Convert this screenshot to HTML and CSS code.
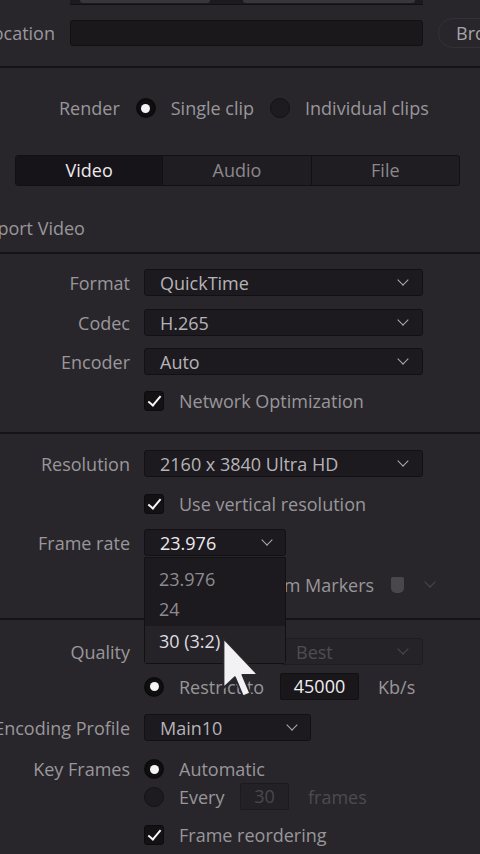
FILE: index.html
```
<!DOCTYPE html>
<html lang="en">

<head>
    <meta charset="UTF-8">
    <meta name="viewport" content="width=device-width, initial-scale=1.0">
    <title>Render Settings</title>
    <link rel="stylesheet" href="styles.css">
</head>

<body>
    <div class="panel">
        <div class="topbox">
            <span class="seg seg-a"></span>
            <span class="seg seg-b"></span>
        </div>

        <div class="row location">
            <div class="label loc-label">Location</div>
            <div class="field"></div>
            <div class="browse">Browse</div>
        </div>

        <div class="divider"></div>

        <div class="render-row">
            <span class="text">Render</span>
            <span class="radio on"></span>
            <span class="text">Single clip</span>
            <span class="radio"></span>
            <span class="text">Individual clips</span>
        </div>

        <div class="tabs">
            <div class="tab active">Video</div>
            <div class="tab">Audio</div>
            <div class="tab">File</div>
        </div>

        <div class="section-title">Export Video</div>
        <div class="divider d-export"></div>

        <div class="row r-format">
            <div class="label">Format</div>
            <div class="select wide"><span>QuickTime</span><i class="chev"></i></div>
        </div>
        <div class="row r-codec">
            <div class="label">Codec</div>
            <div class="select wide"><span>H.265</span><i class="chev"></i></div>
        </div>
        <div class="row r-encoder">
            <div class="label">Encoder</div>
            <div class="select wide"><span>Auto</span><i class="chev"></i></div>
        </div>
        <div class="row r-netopt">
            <div class="label"></div>
            <span class="check"></span>
            <span class="text">Network Optimization</span>
        </div>

        <div class="divider d-res"></div>

        <div class="row r-res">
            <div class="label">Resolution</div>
            <div class="select wide"><span>2160 x 3840 Ultra HD</span><i class="chev"></i></div>
        </div>
        <div class="row r-vert">
            <div class="label"></div>
            <span class="check"></span>
            <span class="text">Use vertical resolution</span>
        </div>
        <div class="row r-rate">
            <div class="label">Frame rate</div>
            <div class="select rate">
                <span class="bright">23.976</span><i class="chev"></i>
                <ul class="popup">
                    <li>23.976</li>
                    <li>24</li>
                    <li class="hover">30 (3:2)</li>
                </ul>
            </div>
        </div>
        <div class="row r-markers">
            <div class="label"></div>
            <span class="check empty"></span>
            <span class="text">Chapters from Markers</span>
            <span class="swatch"></span>
            <i class="chev dim"></i>
        </div>

        <div class="divider d-quality"></div>

        <div class="row r-quality">
            <div class="label">Quality</div>
            <span class="radio"></span>
            <span class="text">Automatic</span>
            <div class="select disabled"><span>Best</span><i class="chev dim"></i></div>
        </div>
        <div class="row r-restrict">
            <div class="label"></div>
            <span class="radio on"></span>
            <span class="text fixed-restrict">Restrict to</span>
            <div class="input kbs">45000</div>
            <span class="text unit">Kb/s</span>
        </div>
        <div class="row r-profile">
            <div class="label">Encoding Profile</div>
            <div class="select profile"><span>Main10</span><i class="chev"></i></div>
        </div>
        <div class="row r-keys">
            <div class="label">Key Frames</div>
            <span class="radio on"></span>
            <span class="text">Automatic</span>
        </div>
        <div class="row r-every">
            <div class="label"></div>
            <span class="radio"></span>
            <span class="text fixed-every">Every</span>
            <div class="input every">30</div>
            <span class="text faded">frames</span>
        </div>
        <div class="row r-reorder">
            <div class="label"></div>
            <span class="check"></span>
            <span class="text">Frame reordering</span>
        </div>

        <svg class="cursor" width="39" height="63" viewBox="0 0 13 21">
            <path d="M0.5 0.5 L0.5 17 L4.3 13.4 L7 19.8 L9.4 18.8 L6.8 12.6 L12 12.6 Z" fill="#f2f1f3" stroke="#2a282c" stroke-width="0.6" stroke-linejoin="round"/>
        </svg>
    </div>
</body>

</html>
```

FILE: styles.css
```
* {
    box-sizing: border-box;
}

body {
    margin: 0;
    background-color: #28262a;
    overflow: hidden;
}

.panel {
    position: relative;
    width: 480px;
    height: 854px;
    overflow: hidden;
    font-family: "Open Sans", "Noto Sans", sans-serif;
    font-size: 18px;
    color: #9a979c;
}

/* top cut-off control */
.topbox {
    display: flex;
    width: 353px;
    height: 5px;
    margin-left: 70px;
    padding: 0 8px 2px 10px;
    background-color: #1c1a1e;
    border-bottom: 1px solid #111013;
}

.seg {
    height: 3px;
    background-color: #38363a;
    border-radius: 0 0 3px 3px;
}

.seg-a {
    width: 130px;
}

.seg-b {
    width: 172px;
    margin-left: 33px;
}

.row {
    display: flex;
    align-items: center;
    height: 27px;
    white-space: nowrap;
}

.label {
    flex: none;
    width: 130px;
    margin-right: 14px;
    display: flex;
    justify-content: flex-end;
    white-space: nowrap;
}

.location {
    margin-top: 15px;
    height: 26px;
}

.loc-label {
    width: 55px;
    margin-right: 15px;
}

.field {
    flex: none;
    width: 353px;
    height: 26px;
    background-color: #1a181b;
    border: 1px solid #121013;
    border-radius: 3px;
}

.browse {
    flex: none;
    margin-left: 15px;
    height: 30px;
    padding: 0 14px 0 17px;
    line-height: 28px;
    color: #a7a4a9;
    border: 1px solid #333135;
    border-radius: 15px;
}

.divider {
    height: 2px;
    margin-top: 20px;
    background-color: #151316;
}

.render-row {
    display: flex;
    align-items: center;
    height: 30px;
    margin-top: 25px;
    padding-left: 59px;
    white-space: nowrap;
}

.render-row .radio {
    margin: 0 15px 0 16px;
}

.text {
    color: #99969b;
}

.radio {
    flex: none;
    width: 20px;
    height: 20px;
    border-radius: 50%;
    background-color: #1d1b1f;
    border: 1px solid #141215;
    display: inline-flex;
    align-items: center;
    justify-content: center;
}

.radio.on {
    background-color: #0f0e10;
    border: 2px solid #0b0a0c;
}

.radio.on::after {
    content: "";
    width: 9px;
    height: 9px;
    border-radius: 50%;
    background-color: #f4f3f5;
}

.row .radio,
.row .check {
    margin-right: 15px;
}

.tabs {
    display: flex;
    width: 445px;
    height: 31px;
    margin: 32px 0 0 15px;
    background-color: #1f1d21;
    border: 1px solid #111013;
    border-radius: 3px;
}

.tab {
    width: 149px;
    line-height: 29px;
    text-align: center;
    color: #8b888d;
    border-left: 1px solid #121013;
}

.tab:first-child {
    border-left: none;
    width: 147px;
}

.tab.active {
    color: #ebe9ed;
    background-color: #161418;
}

.section-title {
    margin: 28px 0 0 -22px;
    height: 28px;
    line-height: 28px;
    color: #99969b;
}

.d-export {
    margin-top: 10px;
}

.select {
    position: relative;
    flex: none;
    height: 27px;
    display: flex;
    align-items: center;
    justify-content: space-between;
    padding: 0 15px 0 15px;
    background-color: #1c1a1e;
    border: 1px solid #121013;
    border-radius: 3px;
    color: #b6b3b8;
}

.select.wide {
    width: 279px;
}

.select.rate {
    width: 142px;
    padding-right: 14px;
}

.select.profile {
    width: 167px;
    padding-right: 14px;
}

.select.disabled {
    width: 143px;
    margin-left: auto;
    margin-right: 57px;
    color: #4f4d52;
    background-color: #252327;
    border-color: #1e1c20;
}

.bright {
    color: #eceaee;
}

.chev {
    display: block;
    width: 8px;
    height: 8px;
    margin-top: -5px;
    border-right: 1.6px solid #aeabb1;
    border-bottom: 1.6px solid #aeabb1;
    transform: rotate(45deg);
}

.chev.dim {
    border-color: #4a484d;
}

.r-format {
    margin-top: 15px;
}

.r-codec {
    margin-top: 13px;
}

.r-encoder {
    margin-top: 12px;
}

.r-netopt {
    margin-top: 12px;
}

.check {
    flex: none;
    position: relative;
    width: 20px;
    height: 20px;
    background-color: #131114;
    border: 1px solid #0c0b0d;
    border-radius: 3px;
}

.check::after {
    content: "";
    position: absolute;
    left: 6px;
    top: 1px;
    width: 5px;
    height: 11px;
    border-right: 2.6px solid #f7f6f8;
    border-bottom: 2.6px solid #f7f6f8;
    transform: rotate(40deg);
}

.check.empty::after {
    display: none;
}

.d-res {
    margin-top: 18px;
}

.r-res {
    margin-top: 16px;
}

.r-vert {
    margin-top: 13px;
}

.r-rate {
    margin-top: 12px;
    position: relative;
    z-index: 2;
}

.popup {
    position: absolute;
    top: 27px;
    left: -1px;
    width: 142px;
    margin: 0;
    padding: 6px 0 0;
    list-style-type: none;
    background-color: #1c1a1e;
    border: 1px solid #111013;
    border-radius: 0 0 3px 3px;
}

.popup li {
    height: 30px;
    line-height: 30px;
    padding-left: 14px;
    color: #8e8b90;
}

.popup li.hover {
    height: 37px;
    line-height: 31px;
    margin-top: 2px;
    color: #dedce0;
    background-color: #252327;
}

.r-markers {
    margin-top: 15px;
}

.swatch {
    flex: none;
    width: 13px;
    height: 16px;
    margin-left: auto;
    background-color: #49474c;
    border-radius: 2px 2px 5px 5px;
}

.r-markers .chev {
    margin: -5px 46px 0 22px;
}

.d-quality {
    margin-top: 20px;
}

.r-quality {
    margin-top: 18px;
}

.r-restrict {
    margin-top: 8px;
}

.fixed-restrict {
    width: 101px;
}

.input {
    flex: none;
    height: 27px;
    line-height: 25px;
    text-align: center;
    background-color: #19171a;
    border: 1px solid #111013;
    border-radius: 2px;
}

.input.kbs {
    width: 79px;
    color: #f0eef2;
}

.unit {
    margin-left: 19px;
}

.r-profile {
    margin-top: 14px;
}

.r-keys {
    height: 24px;
    margin-top: 16px;
}

.r-every {
    margin-top: 2px;
}

.fixed-every {
    width: 61px;
}

.input.every {
    width: 49px;
    color: #4a484d;
    background-color: #232125;
    border-color: #1c1a1e;
}

.faded {
    margin-left: 19px;
    color: #4d4b50;
}

.r-reorder {
    margin-top: 11px;
}

.cursor {
    position: absolute;
    left: 222px;
    top: 637px;
    z-index: 5;
}
```
